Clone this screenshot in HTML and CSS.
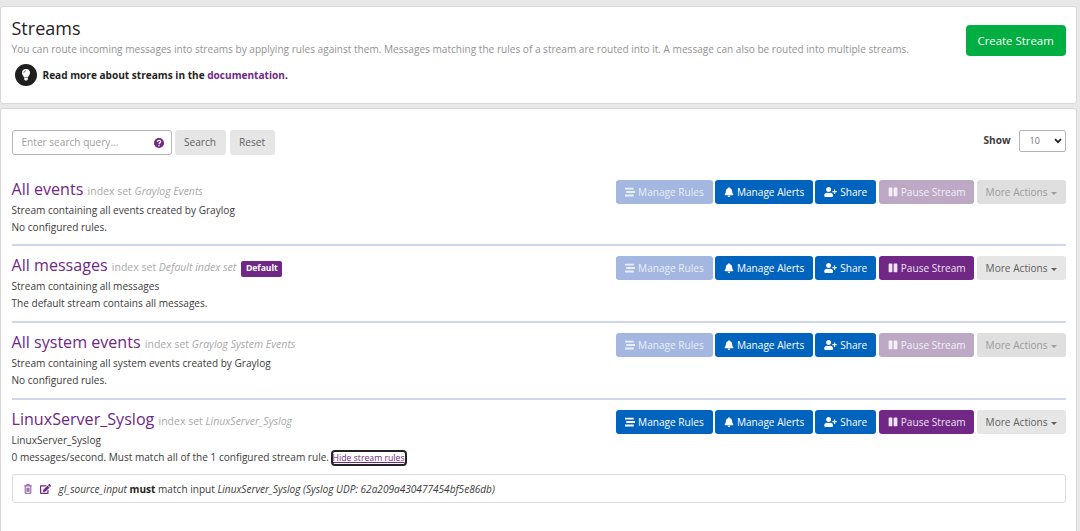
FILE: index.html
```html
<!DOCTYPE html>
<html>
<head>
<meta charset="utf-8">
<title>Streams</title>
<link rel="stylesheet" href="styles.css">
</head>
<body>

<!-- shared icons -->
<svg class="sprite" width="0" height="0">
  <symbol id="rules" viewBox="0 0 16 16"><path d="M0 1h14v3H0zM2 6.500h14v3H2zM0 12h14v3H0z"/></symbol>
  <symbol id="bell" viewBox="0 0 448 512"><path d="M224 512c35.300 0 63.900-28.600 63.900-64H160.100c0 35.400 28.600 64 63.900 64zm215.400-149.700c-19.300-20.800-55.500-52-55.500-154.300 0-77.700-54.500-139.900-127.900-155.200V32c0-17.700-14.300-32-32-32s-32 14.300-32 32v20.800C118.600 68.100 64.100 130.300 64.100 208c0 102.300-36.200 133.500-55.500 154.300-6 6.400-8.700 14.100-8.600 21.700.1 16.400 13 32 32.100 32h383.800c19.100 0 32-15.600 32.100-32 .1-7.600-2.600-15.300-8.600-21.700z"/></symbol>
  <symbol id="share" viewBox="0 0 640 512"><path d="M624 208h-64v-64c0-8.800-7.200-16-16-16h-32c-8.800 0-16 7.200-16 16v64h-64c-8.800 0-16 7.200-16 16v32c0 8.800 7.200 16 16 16h64v64c0 8.800 7.200 16 16 16h32c8.800 0 16-7.200 16-16v-64h64c8.800 0 16-7.200 16-16v-32c0-8.800-7.200-16-16-16zm-400 48c70.700 0 128-57.300 128-128S294.700 0 224 0 96 57.300 96 128s57.300 128 128 128zm89.600 32h-16.700c-22.200 10.200-46.900 16-72.900 16s-50.600-5.800-72.900-16h-16.700C60.200 288 0 348.200 0 422.400V464c0 26.500 21.500 48 48 48h352c26.500 0 48-21.500 48-48v-41.600c0-74.200-60.200-134.400-134.400-134.400z"/></symbol>
  <symbol id="pause" viewBox="0 0 448 512"><path d="M144 479H48c-26.500 0-48-21.500-48-48V79c0-26.500 21.500-48 48-48h96c26.500 0 48 21.500 48 48v352c0 26.500-21.500 48-48 48zm304-48V79c0-26.500-21.500-48-48-48h-96c-26.500 0-48 21.500-48 48v352c0 26.500 21.500 48 48 48h96c26.500 0 48-21.500 48-48z"/></symbol>
</svg>

<div class="panel header">
  <div class="intro">
    <h1>Streams</h1>
    <p class="description">You can route incoming messages into streams by applying rules against them. Messages matching the rules of a stream are routed into it. A message can also be routed into multiple streams.</p>
    <p class="docs">
      <svg class="bulb" viewBox="0 0 22 22"><circle cx="11" cy="11" r="11" fill="#1f1f1f"/><path fill="#fff" d="M11 5a4 4 0 0 0-4 4c0 2 1.500 2.800 2 4.400h4c.5-1.600 2-2.400 2-4.400a4 4 0 0 0-4-4zM9.200 14h3.600v1.400L12 16.500h-2l-.8-1.100z"/><path d="M8.800 9A2.200 2.200 0 0 1 11 6.800" fill="none" stroke="#1f1f1f" stroke-width=".6"/></svg>
      <span>Read more about streams in the <a href="#">documentation</a>.</span>
    </p>
  </div>
  <button class="create">Create Stream</button>
</div>

<div class="panel content">
  <div class="toolbar">
    <div class="search">
      <input type="text" placeholder="Enter search query...">
      <svg class="help" viewBox="0 0 10 10"><circle cx="5" cy="5" r="5" fill="#702785"/><path d="M3.400 3.900C3.500 2 6.600 2 6.600 3.800 6.600 4.900 5 4.900 5 6.200M5 7v1.200" fill="none" stroke="#fff" stroke-width="1.300"/></svg>
    </div>
    <button class="btn gray">Search</button>
    <button class="btn gray">Reset</button>
    <label class="show">Show</label>
    <div class="select"><span>10</span><svg viewBox="0 0 8 6"><path d="M1 1.200l3 3 3-3" fill="none" stroke="#222" stroke-width="1.700"/></svg></div>
  </div>

  <div class="stream">
    <div class="info">
      <h2><a href="#">All events</a> <small>index set <i>Graylog Events</i></small></h2>
      <p>Stream containing all events created by Graylog</p>
      <p>No configured rules.</p>
    </div>
    <div class="actions">
      <button class="btn blue rules off"><svg><use href="#rules"/></svg>Manage Rules</button>
      <button class="btn blue alerts"><svg><use href="#bell"/></svg>Manage Alerts</button>
      <button class="btn blue share"><svg><use href="#share"/></svg>Share</button>
      <button class="btn purple off"><svg><use href="#pause"/></svg>Pause Stream</button>
      <button class="btn gray more off">More Actions<span class="caret"></span></button>
    </div>
  </div>

  <div class="stream">
    <div class="info">
      <h2><a href="#">All messages</a> <small>index set <i>Default index set</i></small> <span class="label">Default</span></h2>
      <p>Stream containing all messages</p>
      <p>The default stream contains all messages.</p>
    </div>
    <div class="actions">
      <button class="btn blue rules off"><svg><use href="#rules"/></svg>Manage Rules</button>
      <button class="btn blue alerts"><svg><use href="#bell"/></svg>Manage Alerts</button>
      <button class="btn blue share"><svg><use href="#share"/></svg>Share</button>
      <button class="btn purple"><svg><use href="#pause"/></svg>Pause Stream</button>
      <button class="btn gray more">More Actions<span class="caret"></span></button>
    </div>
  </div>

  <div class="stream">
    <div class="info">
      <h2><a href="#">All system events</a> <small>index set <i>Graylog System Events</i></small></h2>
      <p>Stream containing all system events created by Graylog</p>
      <p>No configured rules.</p>
    </div>
    <div class="actions">
      <button class="btn blue rules off"><svg><use href="#rules"/></svg>Manage Rules</button>
      <button class="btn blue alerts"><svg><use href="#bell"/></svg>Manage Alerts</button>
      <button class="btn blue share"><svg><use href="#share"/></svg>Share</button>
      <button class="btn purple off"><svg><use href="#pause"/></svg>Pause Stream</button>
      <button class="btn gray more off">More Actions<span class="caret"></span></button>
    </div>
  </div>

  <div class="stream">
    <div class="info">
      <h2><a href="#">LinuxServer_Syslog</a> <small>index set <i>LinuxServer_Syslog</i></small></h2>
      <p>LinuxServer_Syslog</p>
      <p>0 messages/second. Must match all of the 1 configured stream rule. <a class="toggle" href="#">Hide stream rules</a></p>
    </div>
    <div class="actions">
      <button class="btn blue rules"><svg><use href="#rules"/></svg>Manage Rules</button>
      <button class="btn blue alerts"><svg><use href="#bell"/></svg>Manage Alerts</button>
      <button class="btn blue share"><svg><use href="#share"/></svg>Share</button>
      <button class="btn purple"><svg><use href="#pause"/></svg>Pause Stream</button>
      <button class="btn gray more">More Actions<span class="caret"></span></button>
    </div>
  </div>

  <div class="rule">
    <svg class="trash" viewBox="0 0 8 10"><path d="M.2 1.900h7.600M2.700 1.700V.6h2.600v1.100M1.200 2.200v7.100h5.600V2.200M3 3.700v4.200M4 3.700v4.200M5 3.700v4.200" fill="none" stroke="#702785" stroke-width=".8"/></svg>
    <svg class="edit" viewBox="0 0 576 512"><path fill="#702785" d="M402.600 83.200l90.200 90.200c3.800 3.800 3.800 10 0 13.800L274.400 405.600l-92.800 10.300c-12.400 1.400-22.900-9.100-21.500-21.500l10.300-92.800L388.800 83.200c3.800-3.800 10-3.800 13.800 0zm162-22.900l-48.800-48.800c-15.200-15.200-39.900-15.200-55.200 0l-35.400 35.400c-3.800 3.800-3.800 10 0 13.800l90.200 90.200c3.800 3.800 10 3.800 13.800 0l35.400-35.400c15.200-15.300 15.200-40 0-55.200zM384 346.200V448H64V128h229.800c3.200 0 6.200-1.300 8.500-3.500l40-40c7.600-7.600 2.200-20.500-8.500-20.500H48C21.500 64 0 85.500 0 112v352c0 26.500 21.500 48 48 48h352c26.500 0 48-21.500 48-48V306.200c0-10.700-12.900-16-20.500-8.500l-40 40c-2.200 2.300-3.500 5.300-3.500 8.500z"/></svg>
    <span><i>gl_source_input</i> <b>must</b> match input <i>LinuxServer_Syslog (Syslog UDP: 62a209a430477454bf5e86db)</i></span>
  </div>
</div>

</body>
</html>
```
FILE: styles.css
```css
* {
  box-sizing: border-box;
}

body {
  margin: 0;
  padding: 6px 3px 0 0;
  height: 531px;
  overflow: hidden;
  background: #e8e8e8;
  color: #3b3b3b;
  font-family: "Open Sans", sans-serif;
  font-size: 10.08px;
  line-height: 16.5px;
}

h1, h2, p {
  margin: 0;
  font-weight: normal;
}

a {
  color: #702785;
  text-decoration: none;
}

button, input {
  font-family: inherit;
}

.sprite {
  position: absolute;
}

.panel {
  background: #fff;
  border: 1px solid #d8d8d8;
  border-radius: 3px;
  padding: 0 10.4px 0 10.5px;
}

.header {
  display: flex;
  justify-content: space-between;
  align-items: flex-start;
  height: 98px;
}

.header h1 {
  margin-top: 9px;
  font-size: 18px;
  line-height: 24px;
  color: #252525;
}

.description {
  padding-top: 1px;
  color: #939393;
  white-space: nowrap;
}

.docs {
  display: flex;
  align-items: center;
  gap: 6px;
  margin-top: 6px;
  padding-left: 3px;
  font-weight: bold;
  color: #1f1f1f;
}

.docs span {
  padding-top: 1px;
}

.bulb {
  width: 22px;
  height: 22px;
}

.create {
  width: 100px;
  height: 31px;
  margin-top: 18px;
  padding: 0 0 1px;
  border: none;
  border-radius: 4px;
  background: #00ae42;
  color: #fff;
  font-size: 11.4px;
}

.content {
  height: 440px;
  margin-top: 4px;
}

.toolbar {
  display: flex;
  align-items: flex-start;
  margin-top: 21px;
  height: 42px;
}

.search {
  display: flex;
  align-items: center;
  width: 160px;
  height: 25px;
  margin-right: 3px;
  padding: 0 7px 0 9px;
  border: 1px solid #b5b5b5;
  border-radius: 3px;
}

.search input {
  flex: 1;
  min-width: 0;
  padding: 0 0 1px;
  border: none;
  outline: none;
  font-size: 10.1px;
}

.search input::placeholder {
  color: #a0a0a0;
}

.help {
  width: 10px;
  height: 10px;
}

.btn {
  display: flex;
  align-items: center;
  justify-content: center;
  height: 24px;
  padding: 0;
  border: 1px solid transparent;
  border-radius: 3px;
  font-size: 10.1px;
  white-space: nowrap;
}

.btn svg {
  width: 10px;
  height: 10px;
  margin-right: 3px;
  fill: currentColor;
}

.toolbar .btn {
  width: 51px;
  height: 25px;
  padding-bottom: 1px;
}

.toolbar .btn + .btn {
  width: 45px;
  margin-left: 4px;
}

.gray {
  background: #e6e6e6;
  color: #5f5f5f;
}

.blue {
  width: 97.5px;
  background: #0063be;
  color: #fff;
}

.blue.rules {
  width: 97px;
}

.blue.share {
  width: 61px;
  margin-right: .6px;
}

.blue.share svg {
  width: 13px;
}

.purple {
  width: 95px;
  background: #702785;
  color: #eee3f1;
}

.more {
  width: 89px;
}

.blue.off {
  background: #a4b7e0;
  color: #e9eefa;
}

.purple.off {
  background: #bda8c6;
  color: #f4eff6;
}

.gray.off {
  background: #dfdfdf;
  color: #9c9c9c;
}

.caret {
  margin: 2px 0 0 3px;
  border-top: 3px solid;
  border-left: 3px solid transparent;
  border-right: 3px solid transparent;
}

.show {
  margin: 2px 8px 0 auto;
  font-weight: bold;
}

.select {
  display: flex;
  align-items: center;
  justify-content: space-between;
  width: 47px;
  height: 22px;
  padding: 0 3px 0 10px;
  border: 1px solid #b5b5b5;
  border-radius: 2px;
  font-size: 9px;
  color: #777;
}

.select svg {
  width: 8px;
  height: 6px;
}

.stream {
  display: flex;
  justify-content: space-between;
  height: 77px;
  padding-top: 8px;
  border-top: 2px solid #cdd6eb;
}

.toolbar + .stream {
  height: 72px;
  padding-top: 6px;
  border-top: none;
}

.stream h2 {
  height: 24px;
  font-size: 16.1px;
  line-height: 22px;
  white-space: nowrap;
}

.stream small {
  font-size: 10.5px;
  color: #a9a9a9;
}

.label {
  display: inline-block;
  height: 16px;
  margin-left: 1px;
  padding: 0 4.5px;
  border-radius: 2px;
  background: #702785;
  color: #fff;
  font-size: 8.6px;
  font-weight: bold;
  line-height: 15px;
}

.actions {
  display: flex;
  gap: 2.4px;
  padding-top: 2px;
}

.toggle {
  margin-left: 1px;
  font-size: 8.7px;
  text-decoration: underline;
  outline: 2px solid #222;
  border-radius: 2px;
}

.rule {
  display: flex;
  align-items: center;
  height: 29px;
  margin-top: -1px;
  padding-left: 11px;
  border: 1px solid #dcdcdc;
  border-radius: 3px;
}

.rule span {
  padding-top: 1px;
}

.rule b {
  color: #1f1f1f;
}

.trash {
  width: 8px;
  height: 10px;
  margin: 1px 8px 0 0;
}

.edit {
  width: 11px;
  height: 10px;
  margin: 1px 8px 0 0;
}
```
